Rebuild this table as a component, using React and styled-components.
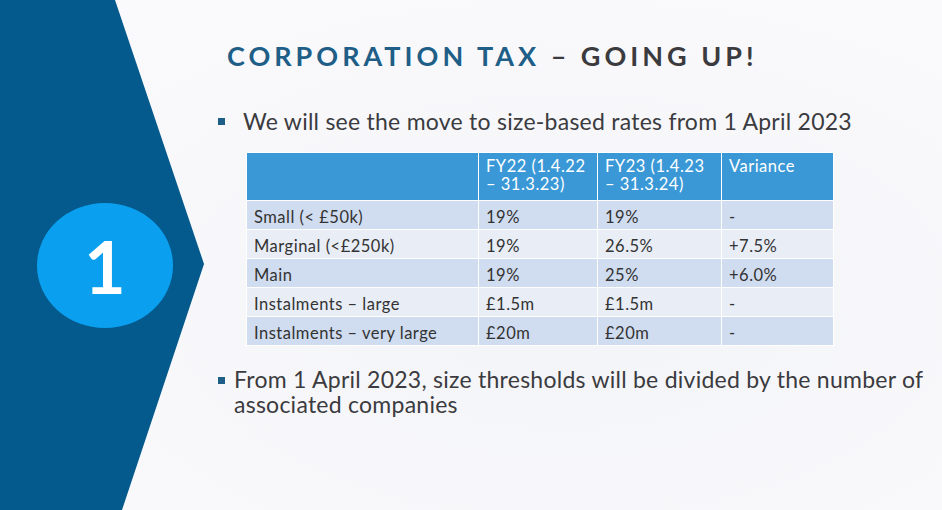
import React from "react";
import styled, { createGlobalStyle } from "styled-components";

const Global = createGlobalStyle`
  html, body { margin: 0; padding: 0; }
  body {
    width: 942px;
    height: 510px;
    overflow: hidden;
    font-family: Lato, "Open Sans", "Liberation Sans", sans-serif;
    background: #f7f7fa;
  }
`;

const Slide = styled.div`
  display: flex;
  width: 942px;
  height: 510px;
  background: radial-gradient(ellipse at 60% 60%, #f3f4f7 0%, #f8f8fb 55%, #fbfbfd 100%);
`;

const Chevron = styled.div`
  flex: 0 0 205px;
  height: 510px;
  background: #045a8d;
  clip-path: polygon(0 0, 115px 0, 204px 264px, 122px 510px, 0 510px);
  display: flex;
  align-items: center;
  justify-content: center;
  padding-left: 5px;
  box-sizing: border-box;
`;

const Badge = styled.div`
  width: 136px;
  height: 125px;
  border-radius: 50%;
  background: #0aa0ef;
  color: #fff;
  font-size: 72px;
  line-height: 1;
  font-weight: 700;
  display: flex;
  align-items: center;
  justify-content: center;
  margin-top: 21px;
`;

const Main = styled.div`
  flex: 1;
  padding: 39px 0 0 13px;
  display: flex;
  flex-direction: column;
`;

const Title = styled.h1`
  margin: 0 0 0 9px;
  font-size: 27px;
  line-height: 34px;
  font-weight: 700;
  letter-spacing: 4px;
  color: #3b3b3f;
  white-space: nowrap;
`;

const Accent = styled.span`
  color: #1e5e87;
`;

const Bullet = styled.div`
  display: flex;
  align-items: flex-start;
  gap: ${(p) => p.$gap}px;
  margin-top: ${(p) => p.$top}px;
  font-size: 23px;
  line-height: ${(p) => p.$lh}px;
  letter-spacing: 0.25px;
  color: #3b3b40;
`;

const Square = styled.span`
  flex: 0 0 7px;
  width: 7px;
  height: 7px;
  background: #1e5e87;
  margin-top: ${(p) => p.$top}px;
`;

const Table = styled.table`
  margin: 17px 0 0 28px;
  width: 587px;
  border-collapse: collapse;
  table-layout: fixed;
  font-size: 16.5px;
  letter-spacing: 0.5px;
  color: #333;
`;

const Th = styled.th`
  background: #3a98d6;
  color: #fff;
  font-weight: 400;
  text-align: left;
  vertical-align: top;
  padding: 4px 4px 0 7px;
  height: 48px;
  box-sizing: border-box;
  line-height: 18px;
  border: 1.5px solid #fff;
  width: ${(p) => p.$w}px;
`;

const Td = styled.td`
  background: ${(p) => (p.$odd ? "#d0dcef" : "#e8edf6")};
  padding: 4px 4px 0 7px;
  height: 29px;
  box-sizing: border-box;
  line-height: 18px;
  border: 1.5px solid #fff;
  white-space: nowrap;
`;

const rows = [
  ["Small (< £50k)", "19%", "19%", "-"],
  ["Marginal (<£250k)", "19%", "26.5%", "+7.5%"],
  ["Main", "19%", "25%", "+6.0%"],
  ["Instalments – large", "£1.5m", "£1.5m", "-"],
  ["Instalments – very large", "£20m", "£20m", "-"],
];

export default function App() {
  return (
    <>
      <Global />
      <Slide>
        <Chevron>
          <Badge>1</Badge>
        </Chevron>
        <Main>
          <Title>
            <Accent>CORPORATION TAX</Accent> – GOING UP!
          </Title>
          <Bullet $gap={18} $top={34} $lh={28}>
            <Square $top={11} />
            <span>We will see the move to size-based rates from 1 April 2023</span>
          </Bullet>
          <Table>
            <thead>
              <tr>
                <Th $w={232}></Th>
                <Th $w={119}>FY22 (1.4.22 – 31.3.23)</Th>
                <Th $w={124}>FY23 (1.4.23 – 31.3.24)</Th>
                <Th $w={112}>Variance</Th>
              </tr>
            </thead>
            <tbody>
              {rows.map((r, i) => (
                <tr key={i}>
                  {r.map((c, j) => (
                    <Td key={j} $odd={i % 2 === 0}>{c}</Td>
                  ))}
                </tr>
              ))}
            </tbody>
          </Table>
          <Bullet $gap={9} $top={21} $lh={25}>
            <Square $top={10} />
            <span>
              From 1 April 2023, size thresholds will be divided by the number of
              <br />
              associated companies
            </span>
          </Bullet>
        </Main>
      </Slide>
    </>
  );
}
